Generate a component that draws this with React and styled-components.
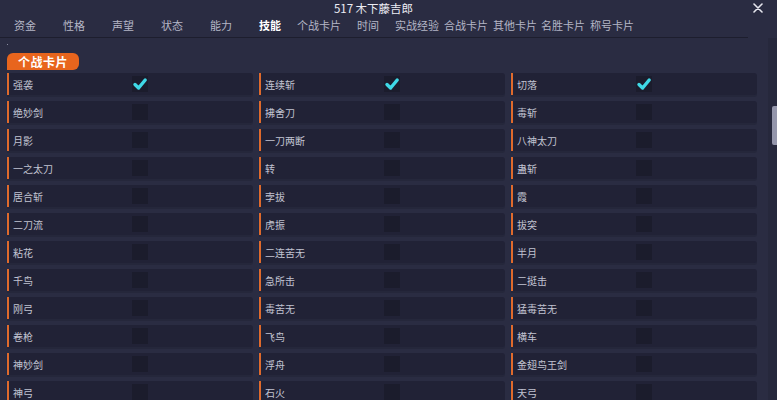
import React from 'react';
import styled, { createGlobalStyle } from 'styled-components';

const GlobalStyle = createGlobalStyle`
    html, body {
        margin: 0;
        padding: 0;
        background: #2a2c42;
    }
    body {
        font-family: "Noto Sans CJK SC", "Noto Sans", sans-serif;
    }
`;

const Window = styled.div`
    width: 777px;
    height: 400px;
    overflow: hidden;
    background: #2a2c42;
    color: #c4c6d4;
    display: flex;
    flex-direction: column;
`;

const TitleBar = styled.div`
    height: 16px;
    display: flex;
    align-items: center;
    justify-content: center;
    padding-right: 30px;
    font-size: 11.5px;
    color: #ececf4;
    position: relative;
`;

const CloseButton = styled.div`
    position: absolute;
    right: 14px;
    top: 3px;
    width: 10px;
    height: 10px;
    display: flex;
`;

const Tabs = styled.div`
    height: 22px;
    width: 748px;
    display: flex;
    align-items: center;
    padding: 0 0 3px 14px;
    box-sizing: border-box;
    border-bottom: 1px solid #1d1e2e;
`;

const Tab = styled.div`
    width: ${props => props.w}px;
    flex-shrink: 0;
    font-size: 11px;
    white-space: nowrap;
    color: ${props => props.active ? '#ffffff' : '#b4b6c6'};
    font-weight: ${props => props.active ? 700 : 400};
`;

const Body = styled.div`
    flex: 1;
    display: flex;
    min-height: 0;
`;

const Content = styled.div`
    flex: 1;
    padding: 9px 11px 0 7px;
    display: flex;
    flex-direction: column;
`;

const ScrollTrack = styled.div`
    width: 9px;
    background: #26283c;
    display: flex;
    justify-content: flex-end;
    padding-top: 68px;
    box-sizing: border-box;
`;

const ScrollThumb = styled.div`
    width: 5px;
    height: 39px;
    border-radius: 2px 0 0 2px;
    background: #9496ab;
`;

const HScroll = styled.div`
    height: 3px;
    width: 240px;
    margin-left: 5px;
    border-radius: 2px;
    background: #1a1b28;
    position: relative;
    &::before {
        content: '';
        position: absolute;
        left: -5px;
        top: -3px;
        width: 1px;
        height: 1px;
        background: #8a8ca0;
    }
`;

const SectionPill = styled.div`
    margin-top: 6px;
    width: 72px;
    height: 18px;
    border-radius: 6px 6px 6px 0;
    background: #e8651d;
    color: #fff;
    font-size: 12px;
    font-weight: 700;
    letter-spacing: 0.5px;
    display: flex;
    align-items: center;
    justify-content: center;
`;

const Grid = styled.div`
    margin-top: 3px;
    display: grid;
    grid-template-columns: repeat(3, 246px);
    column-gap: 6px;
    row-gap: 6px;
`;

const Row = styled.div`
    height: 22px;
    display: flex;
    align-items: center;
    background: #212236;
    border-left: 2px solid #df6a2c;
    border-radius: 0 3px 3px 0;
    box-shadow: -1px 0 0 #1d2a4a, 0 2px 0 #25273b;
    box-sizing: border-box;
`;

const Label = styled.div`
    width: 123px;
    padding-left: 4px;
    box-sizing: border-box;
    font-size: 10px;
    color: #c2c4d2;
    white-space: nowrap;
`;

const Checkbox = styled.div`
    width: 16px;
    height: 16px;
    background: #1b1c2c;
    display: flex;
    align-items: center;
    justify-content: center;
`;

const tabs = [
    ['资金', 49], ['性格', 49], ['声望', 49], ['状态', 49], ['能力', 49],
    ['技能', 38, true], ['个战卡片', 60], ['时间', 38], ['实战经验', 49],
    ['合战卡片', 49], ['其他卡片', 48], ['名胜卡片', 49], ['称号卡片', 49],
];

const columns = [
    ['强袭', '绝妙剑', '月影', '一之太刀', '居合斩', '二刀流', '粘花', '千鸟', '刚弓', '卷枪', '神妙剑', '神弓'],
    ['连续斩', '拂舍刀', '一刀两断', '转', '孛拔', '虎振', '二连苦无', '急所击', '毒苦无', '飞鸟', '浮舟', '石火'],
    ['切落', '毒斩', '八神太刀', '蛊斩', '霞', '拔突', '半月', '二挺击', '猛毒苦无', '横车', '金翅鸟王剑', '天弓'],
];

const skills = [];
for (let r = 0; r < 12; r++) {
    for (let c = 0; c < 3; c++) {
        skills.push({ name: columns[c][r], checked: r === 0 });
    }
}

const Check = () => (
    <svg width="16" height="16" viewBox="0 0 16 16">
        <path d="M3 8.5 L6.6 12 L13.2 4" fill="none" stroke="#3fd8e6" strokeWidth="3.4" strokeLinecap="round" strokeLinejoin="round" />
    </svg>
);

const App = () => {
    return <>
        <GlobalStyle />
        <Window>
            <TitleBar>
                517 木下藤吉郎
                <CloseButton>
                    <svg width="10" height="10" viewBox="0 0 10 10">
                        <path d="M1 1 L9 9 M9 1 L1 9" stroke="#e6e6ee" strokeWidth="1.6" strokeLinecap="round" />
                    </svg>
                </CloseButton>
            </TitleBar>
            <Tabs>
                {tabs.map(([name, w, active]) => (
                    <Tab key={name} w={w} active={active}>{name}</Tab>
                ))}
            </Tabs>
            <Body>
                <Content>
                    <HScroll />
                    <SectionPill>个战卡片</SectionPill>
                    <Grid>
                        {skills.map((s, i) => (
                            <Row key={i}>
                                <Label>{s.name}</Label>
                                <Checkbox>{s.checked && <Check />}</Checkbox>
                            </Row>
                        ))}
                    </Grid>
                </Content>
                <ScrollTrack>
                    <ScrollThumb />
                </ScrollTrack>
            </Body>
        </Window>
    </>
};

export default App;
